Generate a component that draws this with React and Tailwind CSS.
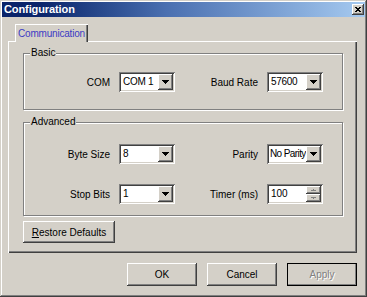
import React from 'react';

const raised = 'shadow-[inset_-1px_-1px_#404040,inset_1px_1px_#fff,inset_-2px_-2px_#808080,inset_2px_2px_#d4d0c8]';
const sunken = 'shadow-[inset_1px_1px_#808080,inset_-1px_-1px_#fff,inset_2px_2px_#404040,inset_-2px_-2px_#d4d0c8]';

const Arrow = ({ up, color = '#000', small }) => {
  const rows = small ? [3, 1] : [4, 3, 2, 1];
  const w = small ? 5 : 7;
  const h = rows.length;
  return (
    <svg width={w} height={h} shapeRendering="crispEdges">
      {rows.map((n, i) => {
        const width = n * 2 - 1;
        const y = up ? h - 1 - i : i;
        return <rect key={i} x={(w - width) / 2} y={y} width={width} height="1" fill={color} />;
      })}
    </svg>
  );
};

const Combo = ({ value, tight }) => (
  <div className={`flex h-[20px] w-[56px] items-stretch bg-white p-[2px] ${sunken}`}>
    <span className={`min-w-0 flex-1 whitespace-nowrap leading-[16px] ${tight ? 'pl-[1px] tracking-[-0.6px]' : 'pl-[2px] tracking-[-0.3px]'}`}>{value}</span>
    <div className={`relative flex w-[15px] shrink-0 items-center justify-center bg-[#d4d0c8] ${raised}`}>
      <Arrow />
    </div>
  </div>
);

const Spin = ({ value }) => (
  <div className={`flex h-[20px] w-[56px] items-stretch bg-white p-[2px] ${sunken}`}>
    <span className="flex-1 pl-[2px] leading-[16px]">{value}</span>
    <div className="flex w-[15px] flex-col">
      <div className={`flex flex-1 items-center justify-center bg-[#d4d0c8] ${raised}`}>
        <Arrow up small color="#808080" />
      </div>
      <div className={`flex flex-1 items-center justify-center bg-[#d4d0c8] ${raised}`}>
        <Arrow small color="#808080" />
      </div>
    </div>
  </div>
);

const Group = ({ title, className, children }) => (
  <div className={`border border-[#808080] shadow-[inset_1px_1px_#fff,1px_1px_#fff] ${className}`}>
    <div className="-mt-[7px] ml-[6px] w-fit bg-[#d4d0c8] px-[1px] leading-[12px]">{title}</div>
    {children}
  </div>
);

const Field = ({ label, children }) => (
  <>
    <span className="pr-[9px] text-right">{label}</span>
    {children}
  </>
);

const Button = ({ children, className = '', disabled }) => (
  <button className={`flex items-center justify-center bg-[#d4d0c8] ${raised} ${disabled ? 'text-[#808080] [text-shadow:1px_1px_#fff]' : ''} ${className}`}>
    {children}
  </button>
);

export default function App() {
  return (
    <div className="flex h-[297px] w-[367px] flex-col bg-[#d4d0c8] p-[2px] text-[10px] text-black shadow-[inset_-1px_-1px_#404040,inset_1px_1px_#d4d0c8,inset_-2px_-2px_#808080,inset_2px_2px_#fff] [font-family:'Liberation_Sans',Arial,sans-serif]">
      <div className="flex h-[15px] items-center justify-between bg-gradient-to-r from-[#0a246a] from-10% via-[#4a6fb0] via-45% to-[#a6caf0] pl-[2px] pr-[1px]">
        <span className="text-[11px] font-bold tracking-[-0.1px] text-white">Configuration</span>
        <div className={`flex h-[11px] w-[12px] items-center justify-center bg-[#d4d0c8] ${raised}`}>
          <svg width="6" height="5" shapeRendering="crispEdges">
            <path d="M0 0h2v1h-2zM4 0h2v1h-2zM1 1h4v1h-4zM2 2h2v1h-2zM1 3h4v1h-4zM0 4h2v1h-2zM4 4h2v1h-2z" fill="#000" />
          </svg>
        </div>
      </div>

      <div className="ml-[6px] mt-[7px] flex w-[349px] flex-col">
        <div className="relative z-10 ml-[7px] -mb-[1px] flex h-[18px] w-[73px] items-center justify-center bg-[#d4d0c8] pt-[1px] tracking-[-0.2px] text-[#3b3bc4] shadow-[inset_1px_1px_#fff,inset_-1px_0_#404040,inset_-2px_0_#808080]">
          Communication
        </div>
        <div className="flex h-[212px] flex-col bg-[#d4d0c8] pl-[15px] pr-[14px] pt-[12px] shadow-[inset_1px_1px_#fff,inset_-1px_-1px_#404040,inset_-2px_-2px_#808080]">
          <Group title="Basic" className="pb-[17px]">
            <div className="mt-[13px] grid grid-cols-[95px_56px_92px_56px] items-center">
              <Field label="COM"><Combo value="COM 1" /></Field>
              <Field label="Baud Rate"><Combo value="57600" /></Field>
            </div>
          </Group>
          <Group title="Advanced" className="mt-[12px] pb-[11px]">
            <div className="mt-[16px] grid grid-cols-[95px_56px_92px_56px] items-center gap-y-[20px]">
              <Field label="Byte Size"><Combo value="8" /></Field>
              <Field label="Parity"><Combo value="No Parity" tight /></Field>
              <Field label="Stop Bits"><Combo value="1" /></Field>
              <Field label="Timer (ms)"><Spin value="100" /></Field>
            </div>
          </Group>
          <Button className="mt-[5px] h-[22px] w-[92px]">
            <span><span className="underline">R</span>estore Defaults</span>
          </Button>
        </div>
        <div className="mt-[10px] flex justify-end gap-[10px]">
          <Button className="h-[23px] w-[70px]">OK</Button>
          <Button className="h-[23px] w-[70px]">Cancel</Button>
          <Button disabled className="h-[23px] w-[70px] outline outline-1 -outline-offset-1 outline-black">Apply</Button>
        </div>
      </div>
    </div>
  );
}
